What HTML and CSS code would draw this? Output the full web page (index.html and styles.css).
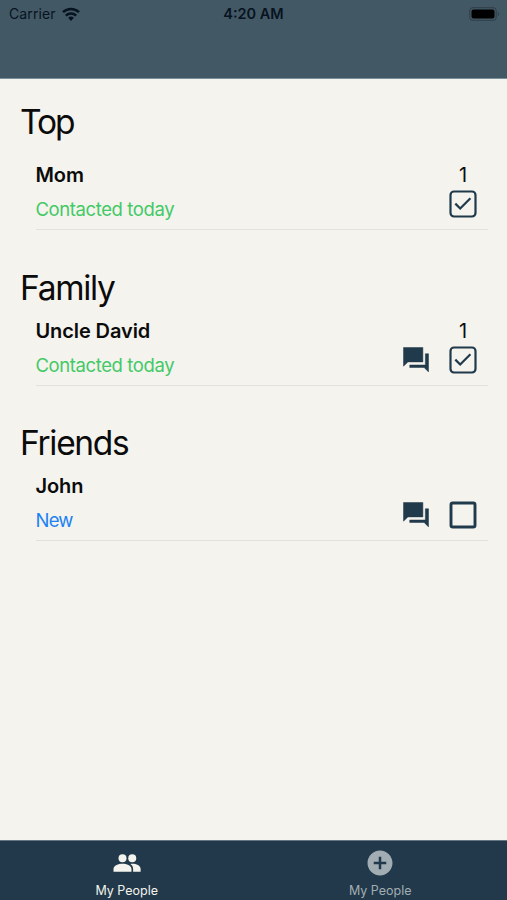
FILE: index.html
```html
<!DOCTYPE html>
<html lang="en">
<head>
<meta charset="UTF-8" />
<meta name="viewport" content="width=device-width, initial-scale=1.0" />
<title>My People</title>
<link rel="stylesheet" href="styles.css">
</head>
<body>

<!-- shared icons -->
<svg class="symbols">
  <symbol id="chat" viewBox="0 0 24 24">
    <path d="M22 7h-2.5v9H7v2h11.5l3.5 3.5zM17.5 2H2v15l3.5-3.5h12z" fill="currentColor" stroke="currentColor" stroke-width="0.4" stroke-linejoin="round" />
  </symbol>
  <symbol id="checked" viewBox="0 0 28 28">
    <rect x="1.5" y="1.5" width="25" height="25" rx="3.5" fill="none" stroke="currentColor" stroke-width="2.2" />
    <path d="M6.3 13.6l4.9 4.9 10.2-10.2" fill="none" stroke="currentColor" stroke-width="2.2" />
  </symbol>
  <symbol id="unchecked" viewBox="0 0 28 28">
    <rect x="2" y="2" width="24" height="24" rx="1.8" fill="none" stroke="currentColor" stroke-width="2.9" />
  </symbol>
</svg>

<header>
  <div class="status-bar">
    <div class="carrier">
      <span>Carrier</span>
      <svg class="wifi" viewBox="0 0 18 14">
        <path d="M1 5.1a11.6 11.6 0 0 1 16 0M3.8 8.6a7.5 7.5 0 0 1 10.4 0" fill="none" stroke="currentColor" stroke-width="2.5" />
        <path d="M9 14l-2.9-3.2a4.2 4.2 0 0 1 5.8 0z" fill="currentColor" />
      </svg>
    </div>
    <span class="time">4:20 AM</span>
    <svg class="battery" viewBox="0 0 31 14">
      <rect x="0.7" y="0.7" width="26.6" height="12.6" rx="3.8" fill="none" stroke="#33434d" stroke-width="1.3" />
      <rect x="2.5" y="2.5" width="23" height="9" rx="2" fill="#000" />
      <path d="M28.8 4.8c2 .8 2 3.6 0 4.4z" fill="#33434d" />
    </svg>
  </div>
</header>

<main>
  <section class="group top">
    <h1>Top</h1>
    <div class="person">
      <div class="info">
        <div class="name">Mom</div>
        <div class="status contacted">Contacted today</div>
      </div>
      <div class="check">
        <span class="count">1</span>
        <svg class="box"><use href="#checked" /></svg>
      </div>
    </div>
  </section>

  <section class="group">
    <h1>Family</h1>
    <div class="person">
      <div class="info">
        <div class="name">Uncle David</div>
        <div class="status contacted">Contacted today</div>
      </div>
      <svg class="chat"><use href="#chat" /></svg>
      <div class="check">
        <span class="count">1</span>
        <svg class="box"><use href="#checked" /></svg>
      </div>
    </div>
  </section>

  <section class="group">
    <h1>Friends</h1>
    <div class="person">
      <div class="info">
        <div class="name">John</div>
        <div class="status new">New</div>
      </div>
      <svg class="chat"><use href="#chat" /></svg>
      <div class="check">
        <span class="count"></span>
        <svg class="box"><use href="#unchecked" /></svg>
      </div>
    </div>
  </section>
</main>

<nav>
  <div class="tab active">
    <svg viewBox="0 0 24 24">
      <circle cx="8.4" cy="8.2" r="3.2" fill="currentColor" />
      <circle cx="16.2" cy="8.2" r="3.2" fill="currentColor" />
      <path d="M1.2 19v-2.3c0-2.7 4-4.1 7.2-4.1s7.2 1.4 7.2 4.1V19zM16.9 19v-2.3c0-1.6-.8-3-2.200-3.900 3.200-.7 8.200.7 8.200 3.900V19z" fill="currentColor" />
    </svg>
    <span>My People</span>
  </div>
  <div class="tab">
    <svg viewBox="0 0 24 24">
      <path d="M12 2C6.48 2 2 6.48 2 12s4.48 10 10 10 10-4.48 10-10S17.52 2 12 2zm5 11h-4v4h-2v-4H7v-2h4V7h2v4h4v2z" fill="currentColor" />
    </svg>
    <span>My People</span>
  </div>
</nav>

</body>
</html>
```
FILE: styles.css
```css
* {
  box-sizing: border-box;
}
body {
  margin: 0;
  height: 900px;
  display: flex;
  flex-direction: column;
  font-family: Inter, "Liberation Sans", sans-serif;
  color: #0b0b0b;
  background-color: #f4f3ee;
}
.symbols {
  display: none;
}
header {
  height: 79px;
  background-color: #425865;
  border-bottom: 1px solid #789099;
}
.status-bar {
  display: grid;
  grid-template-columns: 1fr auto 1fr;
  align-items: center;
  height: 27px;
  padding: 0 7px 0 9px;
  font-size: 14px;
  color: #07131f;
}
.carrier {
  display: flex;
  align-items: center;
  gap: 6px;
}
.carrier span {
  letter-spacing: 0.1px;
}
.wifi {
  width: 18px;
  height: 14px;
}
.time {
  margin-left: -2px;
  font-size: 14.5px;
  font-weight: 600;
}
.battery {
  width: 31px;
  height: 14px;
  justify-self: end;
}
main {
  flex: 1;
  padding: 23px 19px 0 20px;
}
.group {
  margin-bottom: 37.6px;
}
h1 {
  margin: 0 0 6px;
  font-size: 33.5px;
  font-weight: 400;
  line-height: 40px;
  letter-spacing: -1.3px;
}
.top h1 {
  margin-bottom: 16px;
  letter-spacing: -2px;
}
.person {
  display: flex;
  height: 72px;
  margin-left: 15.5px;
  padding-right: 11px;
  border-bottom: 1px solid #e2e1dd;
}
.info {
  flex: 1;
}
.name {
  height: 34px;
  font-size: 20px;
  font-weight: 600;
  line-height: 34px;
  letter-spacing: -0.1px;
}
.status {
  font-size: 18.5px;
  line-height: 34px;
  letter-spacing: -0.4px;
}
.contacted {
  color: #43c966;
}
.new {
  color: #1b82f3;
  letter-spacing: -0.8px;
}
.chat {
  width: 30px;
  height: 30px;
  margin: 31px 18px 0 0;
  color: #20394b;
}
.check {
  display: flex;
  flex-direction: column;
  align-items: center;
}
.count {
  height: 32px;
  font-size: 20px;
  line-height: 34px;
}
.box {
  width: 28px;
  height: 28px;
  color: #20394b;
}
nav {
  display: flex;
  height: 60px;
  background-color: #21394a;
  border-top: 1px solid #637681;
}
.tab {
  flex: 1;
  display: flex;
  flex-direction: column;
  align-items: center;
  padding-top: 7px;
  font-size: 12.5px;
  line-height: 16px;
  color: #a1adb2;
}
.tab svg {
  width: 30px;
  height: 30px;
  margin-bottom: 5px;
}
.active {
  color: #f4f3ee;
}
```
